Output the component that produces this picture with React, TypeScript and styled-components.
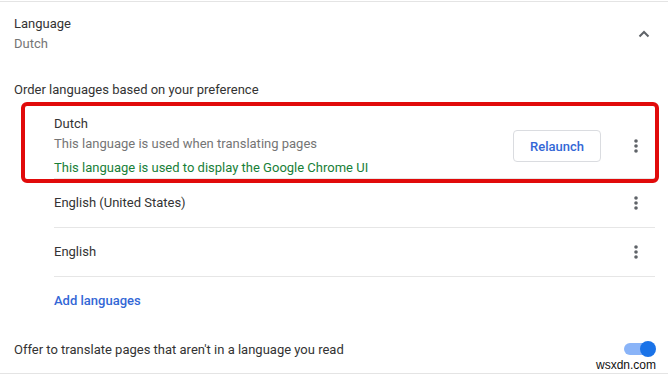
import React from 'react';
import styled, { createGlobalStyle } from 'styled-components';

const GlobalStyle = createGlobalStyle`
  html, body {
    margin: 0;
    padding: 0;
    background: #fff;
  }
  body {
    font-family: Roboto, "Liberation Sans", sans-serif;
    font-size: 13px;
    color: #333;
  }
`;

const StyledPage = styled.div`
  position: relative;
  width: 668px;
  height: 375px;
  overflow: hidden;
  margin-top: 1px;
  border-top: 1px solid #e4e4e4;
  box-sizing: border-box;
`;

const StyledHeader = styled.div`
  display: flex;
  align-items: center;
  justify-content: space-between;
  height: 62px;
  box-sizing: border-box;
  padding: 2px 12px 0 14px;
`;

const StyledTitle = styled.div`
  line-height: 20px;
  color: #333;
`;

const StyledSecondary = styled.div`
  line-height: 20px;
  color: #757575;
`;

const StyledIconBox = styled.div<{ $width: number }>`
  display: flex;
  align-items: center;
  justify-content: center;
  width: ${({ $width }) => $width}px;
  height: 24px;
  flex-shrink: 0;
`;

const StyledSubheading = styled.div`
  padding: 16px 14px 0;
  line-height: 20px;
  color: #333;
`;

const StyledList = styled.ul`
  list-style: none;
  margin: 0 13px 0 54px;
  padding: 0;
`;

const StyledItem = styled.li<{ $tall?: boolean }>`
  position: relative;
  display: flex;
  align-items: center;
  min-height: 48px;
  padding: ${({ $tall }) => ($tall ? '14px 0 0' : '0')};
  border-bottom: 1px solid #e6e6e6;
`;

const StyledItemText = styled.div`
  flex: 1;
  line-height: 20px;
`;

const StyledGreen = styled.div`
  margin-top: 4px;
  line-height: 20px;
  color: #188038;
`;

const StyledButton = styled.button`
  width: 88px;
  height: 32px;
  margin-right: 16px;
  border: 1px solid #dadce0;
  border-radius: 4px;
  background: #fff;
  color: #3367d6;
  font-family: Roboto, "Liberation Sans", sans-serif;
  font-size: 13px;
  font-weight: 500;
  padding: 0;
`;

const StyledLinkRow = styled.div`
  display: flex;
  align-items: center;
  height: 48px;
  margin-left: 54px;
`;

const StyledLink = styled.span`
  color: #3367d6;
  font-weight: 500;
  line-height: 20px;
`;

const StyledToggleRow = styled.div`
  display: flex;
  align-items: center;
  justify-content: space-between;
  height: 48px;
  padding: 0 14px;
  border-bottom: 1px solid #e4e4e4;
`;

const StyledToggle = styled.div`
  position: relative;
  width: 30px;
  height: 12px;
  border-radius: 6px;
  background: #8ab4f8;
`;

const StyledKnob = styled.div`
  position: absolute;
  top: -2px;
  right: -2px;
  width: 16px;
  height: 16px;
  border-radius: 50%;
  background: #1a73e8;
`;

const StyledHighlight = styled.div`
  position: absolute;
  top: 2px;
  left: -33px;
  right: -4px;
  bottom: -5px;
  border: 4px solid #e10a0a;
  border-radius: 6px;
  pointer-events: none;
`;

const StyledWatermark = styled.div`
  position: absolute;
  right: 12px;
  bottom: 4px;
  font-family: "Liberation Sans", Arial, sans-serif;
  font-size: 12px;
  color: #111;
  line-height: 13px;
`;

const Kebab: React.FC = () => (
  <StyledIconBox $width={38}>
    <svg width="6" height="16" viewBox="0 0 6 16">
      <circle cx="3" cy="3" r="1.8" fill="#5f6368" />
      <circle cx="3" cy="8" r="1.8" fill="#5f6368" />
      <circle cx="3" cy="13" r="1.8" fill="#5f6368" />
    </svg>
  </StyledIconBox>
);

const languages = ['English (United States)', 'English'];

const App: React.FC = () => (
  <>
    <GlobalStyle />
    <StyledPage>
      <StyledHeader>
        <div>
          <StyledTitle>Language</StyledTitle>
          <StyledSecondary>Dutch</StyledSecondary>
        </div>
        <StyledIconBox $width={24}>
          <svg width="12" height="8" viewBox="0 0 12 8">
            <polyline points="1.5,6.5 6,2 10.5,6.5" fill="none" stroke="#5f6368" strokeWidth="2" />
          </svg>
        </StyledIconBox>
      </StyledHeader>
      <StyledSubheading>Order languages based on your preference</StyledSubheading>
      <StyledList>
        <StyledItem $tall>
          <StyledItemText>
            <div>Dutch</div>
            <StyledSecondary>This language is used when translating pages</StyledSecondary>
            <StyledGreen>This language is used to display the Google Chrome UI</StyledGreen>
          </StyledItemText>
          <StyledButton>Relaunch</StyledButton>
          <Kebab />
          <StyledHighlight />
        </StyledItem>
        {languages.map((name) => (
          <StyledItem key={name}>
            <StyledItemText>{name}</StyledItemText>
            <Kebab />
          </StyledItem>
        ))}
      </StyledList>
      <StyledLinkRow>
        <StyledLink>Add languages</StyledLink>
      </StyledLinkRow>
      <StyledToggleRow>
        <span>Offer to translate pages that aren't in a language you read</span>
        <StyledToggle>
          <StyledKnob />
        </StyledToggle>
      </StyledToggleRow>
      <StyledWatermark>wsxdn.com</StyledWatermark>
    </StyledPage>
  </>
);

export default App;
